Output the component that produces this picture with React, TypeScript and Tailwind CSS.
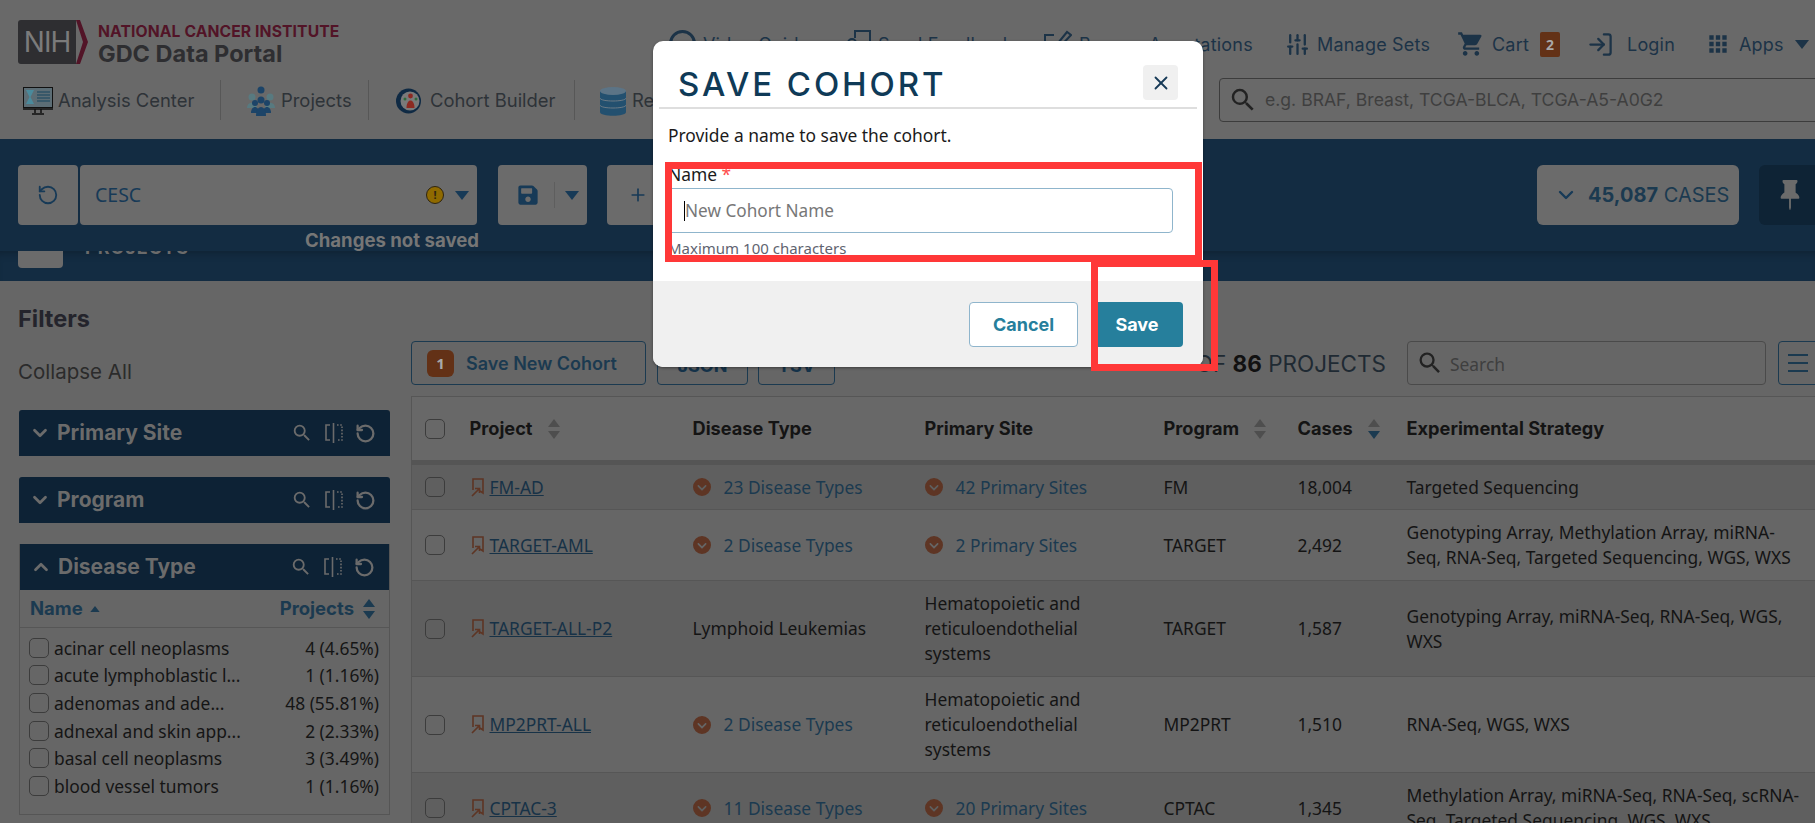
import { ChevronDown, ChevronUp, LogIn, Plus, RotateCcw, SlidersVertical, X } from "lucide-react";
import { BsPinFill } from "react-icons/bs";
import { FaSave } from "react-icons/fa";
import { FaCircleChevronDown } from "react-icons/fa6";
import { MdApps, MdSearch, MdShoppingCart } from "react-icons/md";

const head = "font-['Inter',sans-serif]";
const body = "font-['Noto_Sans',sans-serif]";

function Sort({ active = "", all = false }: { active?: string; all?: boolean }) {
  return (
    <svg width="12" height="20" viewBox="0 0 12 20" className="shrink-0">
      <path d="M6 0 L12 8 H0 Z" fill={active === "up" || all ? "#1b3a50" : "#4e4e4e"} />
      <path d="M6 20 L12 12 H0 Z" fill={active === "down" || all ? "#1b3a50" : "#4e4e4e"} />
    </svg>
  );
}

function Caret({ className = "" }: { className?: string }) {
  return (
    <svg width="14" height="9" viewBox="0 0 14 9" className={`shrink-0 ${className}`}>
      <path d="M0 0 H14 L7 9 Z" fill="currentColor" />
    </svg>
  );
}

function LinkMark() {
  return (
    <svg width="13" height="19" viewBox="0 0 13 19" fill="none" stroke="#5e3524" strokeWidth="1.6" className="shrink-0">
      <path d="M2 12 V1 H12 V15 L9 13" />
      <path d="M1 18 L8 11 M4 10.5 H8.5 V15" />
    </svg>
  );
}

function AnalysisIcon() {
  return (
    <svg width="30" height="28" viewBox="0 0 30 28" className="shrink-0">
      <rect x="0.5" y="0.5" width="29" height="20" fill="#5c6d75" stroke="#111" />
      <path d="M3 3 H11 L7.5 10 L11 17 H3 L6.5 10 Z" fill="#4a8a9c" />
      <path d="M14 5 H27 M14 8 H27 M14 11 H27 M14 14 H27" stroke="#2c5166" strokeWidth="1.5" />
      <path d="M0 22 H30 M12 22 V26 M18 22 V26 M9 27 H21" stroke="#111" strokeWidth="1.5" />
    </svg>
  );
}

function ProjectsIcon() {
  return (
    <svg width="30" height="30" viewBox="0 0 30 30" className="shrink-0">
      <g fill="#587a80">
        <circle cx="6" cy="11" r="3.5" />
        <circle cx="24" cy="11" r="3.5" />
        <path d="M1 22 C1 15 11 15 11 22 Z" />
        <path d="M19 22 C19 15 29 15 29 22 Z" />
      </g>
      <g fill="#1c4468">
        <circle cx="15" cy="4" r="3.5" />
        <circle cx="15" cy="14" r="3.5" />
        <circle cx="9" cy="17" r="3" />
        <circle cx="21" cy="17" r="3" />
        <path d="M5 27 C5 19 13 19 13 27 Z" />
        <path d="M17 27 C17 19 25 19 25 27 Z" />
        <path d="M10 30 C10 18 20 18 20 30 Z" />
      </g>
    </svg>
  );
}

function CohortIcon() {
  return (
    <svg width="25" height="26" viewBox="0 0 25 26" className="shrink-0">
      <circle cx="12.5" cy="13" r="12.5" fill="#0f2a44" />
      <circle cx="14" cy="13" r="9.5" fill="#7a7a7a" />
      <circle cx="14.5" cy="8" r="2.4" fill="#8c2a22" />
      <path d="M10.5 20 C10.5 10 18.5 10 18.5 20 Z" fill="#8c2a22" />
      <circle cx="9" cy="11" r="1.5" fill="#2f6b3c" />
      <circle cx="20" cy="11" r="1.5" fill="#2f6b3c" />
    </svg>
  );
}

function DatabaseIcon() {
  return (
    <svg width="26" height="29" viewBox="0 0 26 29" className="shrink-0">
      <path d="M0 4 V25 C0 30 26 30 26 25 V4 Z" fill="#23506f" />
      <path d="M0 11 C0 15 26 15 26 11 M0 18 C0 22 26 22 26 18" stroke="#6b7a85" strokeWidth="1" fill="none" />
      <ellipse cx="13" cy="4" rx="13" ry="4" fill="#5c7486" />
    </svg>
  );
}

function SplitIcon() {
  return (
    <svg width="18" height="20" viewBox="0 0 18 20" fill="none" stroke="#6b6b6b" strokeWidth="1.6" className="shrink-0">
      <path d="M5 2 H1 V17 H5 M8.5 0 V20" />
      <path d="M12 2 H17 V17 H12" strokeDasharray="1.6 1.6" />
    </svg>
  );
}

function FeedbackIcon() {
  return (
    <svg width="24" height="28" viewBox="0 0 24 28" fill="none" stroke="#1c3347" strokeWidth="2" className="shrink-0">
      <path d="M8 8 V1 H23 V20" />
      <circle cx="5" cy="13" r="4" />
    </svg>
  );
}

function AnnotateIcon() {
  return (
    <svg width="28" height="28" viewBox="0 0 28 28" fill="none" stroke="#1c3347" strokeWidth="2" className="shrink-0">
      <path d="M10 5 H1 V27 H24 V15" />
      <path d="M10 18 L23 2 L27 5 L13 20 Z" />
    </svg>
  );
}

const topLinks = [
  { w: "w-[178px]", label: "Video Guides", icon: <div className="h-[28px] w-[27px] shrink-0 rounded-full border-[3px] border-[#1c3347]" /> },
  { w: "w-[197px]", label: "Send Feedback", icon: <FeedbackIcon /> },
  { w: "w-[241px]", label: "Browse Annotations", icon: <AnnotateIcon /> },
];

const tabs = [
  { w: "w-[198px] gap-[5px]", label: "Analysis Center", icon: <AnalysisIcon /> },
  { w: "w-[148px] gap-[5px] pl-[25px]", label: "Projects", icon: <ProjectsIcon /> },
  { w: "w-[206px] gap-[9px] pl-[27px]", label: "Cohort Builder", icon: <CohortIcon /> },
  { w: "w-[200px] gap-[6px] pl-[25px]", label: "Repository", icon: <DatabaseIcon /> },
];

function Header() {
  return (
    <div className="flex h-[139px] flex-col bg-[#696969]">
      <div className="flex h-[78px] shrink-0 items-start pl-[18px] pt-[20px]">
        <div className="flex h-[44px] w-[70px] shrink-0">
          <div className={`flex h-full w-[58px] items-center justify-center rounded-l-[3px] bg-[#2e2e31] text-[28px] tracking-[-1px] text-[#7b7b7b] ${head}`}>NIH</div>
          <svg width="12" height="44" viewBox="0 0 12 44">
            <path d="M0 0 H4 L12 22 L4 44 H0 L7 22 Z" fill="#521427" />
          </svg>
        </div>
        <div className={`ml-[10px] flex w-[250px] shrink-0 flex-col pt-[3px] ${head}`}>
          <span className="whitespace-nowrap text-[15.7px] font-bold leading-[17px] tracking-[0.1px] text-[#521427]">NATIONAL CANCER INSTITUTE</span>
          <span className="whitespace-nowrap text-[23.5px] font-bold leading-[27px] text-[#2e2e31]">GDC Data Portal</span>
        </div>
        <div className={`ml-[321px] flex h-[48px] items-center text-[18px] tracking-[0.2px] text-[#1c3347] ${head}`}>
          {topLinks.map((l) => (
            <div key={l.label} className={`flex shrink-0 items-center gap-[7px] ${l.w}`}>
              {l.icon}
              <span className="whitespace-nowrap">{l.label}</span>
            </div>
          ))}
          <div className="flex w-[172px] shrink-0 items-center gap-[7px]">
            <SlidersVertical size={25} strokeWidth={2.2} />
            <span className="whitespace-nowrap">Manage Sets</span>
          </div>
          <div className="flex w-[130px] shrink-0 items-center gap-[7px]">
            <MdShoppingCart size={28} />
            <span>Cart</span>
            <span className={`ml-[4px] flex h-[25px] w-[20px] items-center justify-center rounded-[2px] bg-[#633116] text-[14px] font-bold text-[#a8a8a8] ${body}`}>2</span>
          </div>
          <div className="flex w-[118px] shrink-0 items-center gap-[13px]">
            <LogIn size={27} />
            <span>Login</span>
          </div>
          <div className="flex shrink-0 items-center gap-[8px]">
            <MdApps size={26} />
            <span>Apps</span>
            <Caret className="ml-[3px]" />
          </div>
        </div>
      </div>
      <div className={`flex h-[44px] items-center pl-[23px] text-[18.4px] text-[#2e3338] ${head}`}>
        {tabs.map((t, i) => (
          <div key={t.label} className={`flex h-[40px] shrink-0 items-center pt-[2px] ${t.w} ${i < 3 ? "border-r border-[#575757]" : ""}`}>
            {t.icon}
            <span className="whitespace-nowrap">{t.label}</span>
          </div>
        ))}
        <div className="ml-auto mr-[-4px] flex h-[44px] w-[600px] shrink-0 items-center gap-[7px] rounded-[4px] border border-[#3c3c3c] pl-[8px]">
          <MdSearch size={30} className="shrink-0 text-[#222]" />
          <span className="whitespace-nowrap text-[17.6px] text-[#3f3f3f]">e.g. BRAF, Breast, TCGA-BLCA, TCGA-A5-A0G2</span>
        </div>
      </div>
    </div>
  );
}

function CohortBar() {
  return (
    <div className="h-[142px] bg-[#132c42]">
      <div className="h-[112px] pl-[18px] pt-[26px]">
        <div className="flex items-start">
          <div className="flex h-[60px] w-[60px] shrink-0 items-center justify-center rounded-[4px] bg-[#6b6b6b] text-[#173a57]">
            <RotateCcw size={22} />
          </div>
          <div className="relative ml-[2px] h-[82px] w-[397px] shrink-0">
            <div className={`flex h-[60px] items-center rounded-[4px] bg-[#6b6b6b] pl-[15px] pr-[8px] text-[19.5px] text-[#173a57] ${body}`}>
              <span>CESC</span>
              <div className="ml-auto flex h-[18px] w-[18px] items-center justify-center rounded-full border border-[#2e2410] bg-[#8f6a00] text-[11px] font-bold text-[#2e2410]">!</div>
              <Caret className="ml-[11px]" />
            </div>
            <div className={`-mr-[2px] mt-[6px] whitespace-nowrap text-right text-[18.6px] font-bold leading-[18px] text-[#767676] ${head}`}>Changes not saved</div>
          </div>
          <div className="ml-[21px] flex h-[60px] w-[89px] shrink-0 items-center rounded-[4px] bg-[#6b6b6b] pl-[19px] text-[#173a57]">
            <FaSave size={22} />
            <div className="ml-[15px] h-[26px] w-px bg-[#5e5e5e]" />
            <Caret className="ml-[10px]" />
          </div>
          <div className="ml-[20px] flex h-[60px] w-[100px] shrink-0 items-center rounded-[4px] bg-[#6b6b6b] pl-[21px] text-[#173a57]">
            <Plus size={20} />
          </div>
          <div className={`ml-[830px] flex h-[60px] w-[202px] shrink-0 items-center rounded-[6px] bg-[#6b6b6b] pl-[17px] text-[20px] text-[#1b3a50] ${head}`}>
            <ChevronDown size={24} strokeWidth={2.4} className="shrink-0 text-[#173a57]" />
            <span className="ml-[10px] whitespace-nowrap"><b>45,087</b> CASES</span>
          </div>
          <div className="ml-[20px] flex h-[60px] w-[70px] shrink-0 items-center rounded-[6px] bg-[#0e2335] pl-[16px] text-[#6b6b6b]">
            <BsPinFill size={30} />
          </div>
        </div>
      </div>
      <div className="h-[30px] overflow-hidden pl-[18px] shadow-[inset_0_8px_8px_-6px_rgba(0,0,0,0.25)]">
        <div className="-mt-[13px] flex items-start">
          <div className="h-[30px] w-[45px] rounded-[4px] bg-[#6b6b6b]" />
          <span className={`-mt-[2px] ml-[22px] text-[18px] font-bold uppercase leading-[24px] tracking-[1px] text-[#6b6b6b] ${head}`}>Projects</span>
        </div>
      </div>
    </div>
  );
}

function FilterHead({ title, open = false }: { title: string; open?: boolean }) {
  return (
    <div className={`flex h-[46px] items-center bg-[#0d2235] pl-[10px] pr-[14px] text-[#6b6b6b] ${open ? "" : "rounded-t-[3px]"}`}>
      {open ? <ChevronUp size={22} strokeWidth={3} /> : <ChevronDown size={22} strokeWidth={3} />}
      <span className={`ml-[6px] text-[21px] font-bold ${head}`}>{title}</span>
      <MdSearch size={22} className="ml-auto" />
      <div className="ml-[12px]"><SplitIcon /></div>
      <RotateCcw size={21} strokeWidth={2.6} className="ml-[12px]" />
    </div>
  );
}

const diseaseRows = [
  ["acinar cell neoplasms", "4 (4.65%)"],
  ["acute lymphoblastic l...", "1 (1.16%)"],
  ["adenomas and ade...", "48 (55.81%)"],
  ["adnexal and skin app...", "2 (2.33%)"],
  ["basal cell neoplasms", "3 (3.49%)"],
  ["blood vessel tumors", "1 (1.16%)"],
];

function Sidebar() {
  return (
    <div className="w-[411px] shrink-0 pl-[18px] pr-[21px]">
      <div className={`pt-[24px] text-[23.5px] font-bold leading-[28px] text-[#24242c] ${head}`}>Filters</div>
      <div className={`mt-[27px] text-[20.5px] leading-[24px] text-[#2b2b2b] ${head}`}>Collapse All</div>
      <div className="mt-[26px] pl-[1px]"><FilterHead title="Primary Site" /></div>
      <div className="mt-[21px] pl-[1px]"><FilterHead title="Program" /></div>
      <div className="ml-[1px] mt-[21px] border-x border-b border-[#555]">
        <FilterHead title="Disease Type" open />
        <div className={`flex h-[38px] items-center border-b border-[#565656] pl-[10px] pr-[14px] text-[18.5px] font-bold text-[#1b3a50] ${head}`}>
          <span>Name</span>
          <Caret className="ml-[7px] h-[6px] w-[10px] rotate-180" />
          <span className="ml-auto">Projects</span>
          <div className="ml-[9px]"><Sort all /></div>
        </div>
        <div className={`flex flex-col pb-[14px] pl-[9px] pr-[10px] pt-[6px] text-[17.4px] text-[#151515] ${body}`}>
          {diseaseRows.map(([name, count]) => (
            <div key={name} className="flex h-[27.6px] items-center">
              <div className="h-[20px] w-[20px] shrink-0 rounded-[5px] border border-[#3c3c3c]" />
              <span className="ml-[5px] whitespace-nowrap">{name}</span>
              <span className="ml-auto whitespace-nowrap">{count}</span>
            </div>
          ))}
        </div>
      </div>
    </div>
  );
}

type Row = { project: string; disease: string; diseaseLink: boolean; site: string; siteLink: boolean; program: string; cases: string; strategy: string; h: string; dark: boolean };

const rows: Row[] = [
  { project: "FM-AD", disease: "23 Disease Types", diseaseLink: true, site: "42 Primary Sites", siteLink: true, program: "FM", cases: "18,004", strategy: "Targeted Sequencing", h: "h-[47px]", dark: true },
  { project: "TARGET-AML", disease: "2 Disease Types", diseaseLink: true, site: "2 Primary Sites", siteLink: true, program: "TARGET", cases: "2,492", strategy: "Genotyping Array, Methylation Array, miRNA-Seq, RNA-Seq, Targeted Sequencing, WGS, WXS", h: "h-[71px]", dark: false },
  { project: "TARGET-ALL-P2", disease: "Lymphoid Leukemias", diseaseLink: false, site: "Hematopoietic and reticuloendothelial systems", siteLink: false, program: "TARGET", cases: "1,587", strategy: "Genotyping Array, miRNA-Seq, RNA-Seq, WGS, WXS", h: "h-[96px]", dark: true },
  { project: "MP2PRT-ALL", disease: "2 Disease Types", diseaseLink: true, site: "Hematopoietic and reticuloendothelial systems", siteLink: false, program: "MP2PRT", cases: "1,510", strategy: "RNA-Seq, WGS, WXS", h: "h-[96px]", dark: false },
  { project: "CPTAC-3", disease: "11 Disease Types", diseaseLink: true, site: "20 Primary Sites", siteLink: true, program: "CPTAC", cases: "1,345", strategy: "Methylation Array, miRNA-Seq, RNA-Seq, scRNA-Seq, Targeted Sequencing, WGS, WXS", h: "h-[71px]", dark: true },
];

function Cell({ text, link }: { text: string; link: boolean }) {
  if (!link) return <span>{text}</span>;
  return (
    <span className="flex items-center gap-[13px] text-[#1b3a50]">
      <FaCircleChevronDown size={18} className="shrink-0 text-[#5e3524]" />
      {text}
    </span>
  );
}

function ProjectTable() {
  return (
    <table className={`mt-[11px] w-[1404px] table-fixed border-collapse border-t border-l border-[#565656] text-left text-[17.4px] leading-[25px] text-[#141414] ${body}`}>
      <colgroup>
        <col className="w-[47px]" />
        <col className="w-[222px]" />
        <col className="w-[232px]" />
        <col className="w-[239px]" />
        <col className="w-[134px]" />
        <col className="w-[109px]" />
        <col />
      </colgroup>
      <thead className={`text-[18.2px] ${head}`}>
        <tr className="h-[66px] border-b-[5px] border-[#555] bg-[#686868]">
          <th className="pl-[13px]"><div className="h-[20px] w-[20px] rounded-[5px] border border-[#3c3c3c]" /></th>
          <th className="pl-[11px] font-bold"><span className="flex items-center gap-[15px]">Project <Sort /></span></th>
          <th className="pl-[12px] font-bold">Disease Type</th>
          <th className="pl-[12px] font-bold">Primary Site</th>
          <th className="pl-[12px] font-bold"><span className="flex items-center gap-[15px]">Program <Sort /></span></th>
          <th className="pl-[12px] font-bold"><span className="flex items-center gap-[15px]">Cases <Sort active="down" /></span></th>
          <th className="pl-[12px] font-bold">Experimental Strategy</th>
        </tr>
      </thead>
      <tbody>
        {rows.map((r) => (
          <tr key={r.project} className={`${r.h} border-b border-[#565656] ${r.dark ? "bg-[#5f5f5f]" : "bg-[#666666]"}`}>
            <td className="pl-[13px]"><div className="h-[20px] w-[20px] rounded-[5px] border border-[#3c3c3c]" /></td>
            <td className="pl-[12px]">
              <span className="flex items-center gap-[6px]">
                <LinkMark />
                <span className="text-[#173247] underline">{r.project}</span>
              </span>
            </td>
            <td className="pl-[12px]"><Cell text={r.disease} link={r.diseaseLink} /></td>
            <td className="pl-[12px] pr-[10px]"><Cell text={r.site} link={r.siteLink} /></td>
            <td className="pl-[12px]">{r.program}</td>
            <td className="pl-[12px]">{r.cases}</td>
            <td className="pl-[12px] pr-[6px]">{r.strategy}</td>
          </tr>
        ))}
      </tbody>
    </table>
  );
}

function Main() {
  return (
    <div className="w-[1404px] shrink-0 pt-[60px]">
      <div className="flex h-[44px] items-stretch">
        <div className="flex w-[235px] shrink-0 items-center rounded-[4px] border border-[#1b3a50] pl-[15px]">
          <span className={`flex h-[27px] w-[27px] items-center justify-center rounded-[6px] bg-[#633116] text-[15px] font-bold text-[#a8a8a8] ${body}`}>1</span>
          <span className={`ml-[12px] whitespace-nowrap pt-[1px] text-[18px] font-semibold text-[#1b3a50] ${head}`}>Save New Cohort</span>
        </div>
        <div className={`ml-[11px] flex w-[91px] shrink-0 items-center justify-center rounded-[4px] border border-[#1b3a50] pt-[4px] text-[18px] font-bold text-[#15334a] ${head}`}>JSON</div>
        <div className={`ml-[10px] flex w-[77px] shrink-0 items-center justify-center rounded-[4px] border border-[#1b3a50] pt-[4px] text-[18px] font-bold text-[#15334a] ${head}`}>TSV</div>
        <div className={`ml-auto flex items-center whitespace-nowrap pt-[2px] text-[22.5px] text-[#1f2a33] ${head}`}>
          OF&nbsp;<b className="text-[#111]">86</b>&nbsp;PROJECTS
        </div>
        <div className="ml-[21px] flex w-[359px] shrink-0 items-center rounded-[4px] border border-[#4a4a4a] pl-[8px]">
          <MdSearch size={28} className="shrink-0 text-[#222]" />
          <span className={`ml-[6px] pt-[2px] text-[17.4px] text-[#3f3f3f] ${body}`}>Search</span>
        </div>
        <div className="ml-[12px] -mr-[10px] flex w-[47px] shrink-0 items-center rounded-[4px] border border-[#1b3a50] pl-[9px]">
          <div className="flex flex-col gap-[6px]">
            <div className="h-[2px] w-[20px] bg-[#1b3a50]" />
            <div className="h-[2px] w-[20px] bg-[#1b3a50]" />
            <div className="h-[2px] w-[20px] bg-[#1b3a50]" />
          </div>
        </div>
      </div>
      <ProjectTable />
    </div>
  );
}

function SaveModal() {
  return (
    <div className={`absolute left-[653px] top-[41px] flex h-[326px] w-[550px] flex-col overflow-hidden rounded-[10px] bg-white shadow-[0_1px_3px_rgba(0,0,0,0.4)] ${body}`}>
      <div className="mx-[6px] flex h-[68px] shrink-0 items-end border-b-2 border-[#dedede] pb-[3px] pl-[19px] pr-[19px]">
        <span className={`text-[33px] font-medium leading-[40px] tracking-[2.9px] text-[#0f3a57] ${head}`}>SAVE COHORT</span>
        <div className="mb-[4px] ml-auto flex h-[35px] w-[35px] items-center justify-center rounded-[4px] bg-[#f0f0f0] text-[#173a57]">
          <X size={22} />
        </div>
      </div>
      <div className="flex-1 pl-[15px] pr-[30px]">
        <p className="mt-[14px] text-[17.4px] leading-[24px] text-[#1b1b1b]">Provide a name to save the cohort.</p>
        <label className="mt-[16px] block text-[17.4px] leading-[22px] text-[#1b1b1b]">
          Name <span className="text-[#ff4d4d]">*</span>
        </label>
        <div className="mt-[3px] flex h-[45px] items-center rounded-[4px] border border-[#8fb5cc] pl-[15px] text-[17.2px] text-[#777]">
          <div className="h-[20px] w-px bg-black" />
          <span>New Cohort Name</span>
        </div>
        <p className="mt-[5px] text-[15px] leading-[20px] text-[#5f6470]">Maximum 100 characters</p>
      </div>
      <div className="flex h-[86px] shrink-0 items-center justify-end gap-[13px] bg-[#f0f0f0] pr-[20px] pt-[1px]">
        <div className={`flex h-[45px] w-[109px] items-center justify-center rounded-[4px] border border-[#8fb5cc] bg-white text-[18px] font-bold text-[#267f9c] ${head}`}>Cancel</div>
        <div className={`flex h-[45px] w-[92px] items-center justify-center rounded-[4px] bg-[#267f9c] text-[18px] font-bold text-white ${head}`}>Save</div>
      </div>
    </div>
  );
}

export default function App() {
  return (
    <div className="relative h-[823px] w-[1815px] overflow-hidden bg-[#666666]">
      <Header />
      <CohortBar />
      <div className="flex">
        <Sidebar />
        <Main />
      </div>
      <SaveModal />
      {/* annotation boxes drawn over the dialog */}
      <div className="absolute left-[665px] top-[162px] h-[100px] w-[537px] border-[7px] border-[#ff3838]" />
      <div className="absolute left-[1091px] top-[260px] h-[111px] w-[127px] border-[7px] border-[#ff3838]" />
    </div>
  );
}
